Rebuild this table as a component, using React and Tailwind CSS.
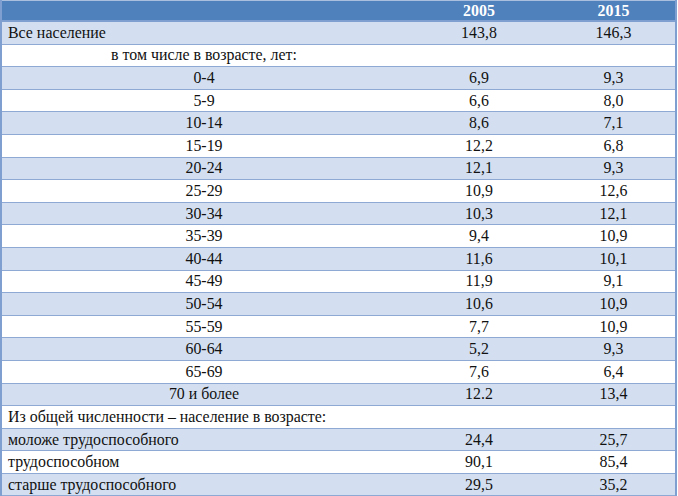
import React from 'react'

const rows = [
  { label: 'Все население', a: '143,8', b: '146,3', align: 'left' },
  { label: 'в том числе в возрасте, лет:', a: '', b: '', align: 'center' },
  { label: '0-4', a: '6,9', b: '9,3', align: 'center' },
  { label: '5-9', a: '6,6', b: '8,0', align: 'center' },
  { label: '10-14', a: '8,6', b: '7,1', align: 'center' },
  { label: '15-19', a: '12,2', b: '6,8', align: 'center' },
  { label: '20-24', a: '12,1', b: '9,3', align: 'center' },
  { label: '25-29', a: '10,9', b: '12,6', align: 'center' },
  { label: '30-34', a: '10,3', b: '12,1', align: 'center' },
  { label: '35-39', a: '9,4', b: '10,9', align: 'center' },
  { label: '40-44', a: '11,6', b: '10,1', align: 'center' },
  { label: '45-49', a: '11,9', b: '9,1', align: 'center' },
  { label: '50-54', a: '10,6', b: '10,9', align: 'center' },
  { label: '55-59', a: '7,7', b: '10,9', align: 'center' },
  { label: '60-64', a: '5,2', b: '9,3', align: 'center' },
  { label: '65-69', a: '7,6', b: '6,4', align: 'center' },
  { label: '70 и более', a: '12.2', b: '13,4', align: 'center' },
  { label: 'Из общей численности – население в возрасте:', a: '', b: '', align: 'left' },
  { label: 'моложе трудоспособного', a: '24,4', b: '25,7', align: 'left' },
  { label: 'трудоспособном', a: '90,1', b: '85,4', align: 'left' },
  { label: 'старше трудоспособного', a: '29,5', b: '35,2', align: 'left' },
]

export default function App() {
  return (
    <div className="w-[678px] h-[496px] bg-white overflow-hidden font-['Liberation_Serif',serif] text-[15.9px] leading-none text-[#111]">
      <div className="w-[677px] border-l-2 border-r-2 border-[#7f9fd0]">
        <div className="grid grid-cols-[404px_146px_1fr] h-[22px] items-center bg-[#4f81bd] border-t border-[#a9bfdd] border-b-2 border-b-[#7f9fd0] text-white font-bold">
          <div></div>
          <div className="text-center">2005</div>
          <div className="text-center">2015</div>
        </div>
        {rows.map((r, i) => (
          <div
            key={i}
            className={`grid grid-cols-[404px_146px_1fr] h-[22.6px] items-center border-b border-[#8eaad4] ${
              i % 2 === 0 ? 'bg-[#d3dff0]' : 'bg-white'
            }`}
          >
            <div className={r.align === 'left' ? 'pl-[6px] whitespace-nowrap' : 'text-center whitespace-nowrap'}>{r.label}</div>
            <div className="text-center">{r.a}</div>
            <div className="text-center">{r.b}</div>
          </div>
        ))}
      </div>
    </div>
  )
}
